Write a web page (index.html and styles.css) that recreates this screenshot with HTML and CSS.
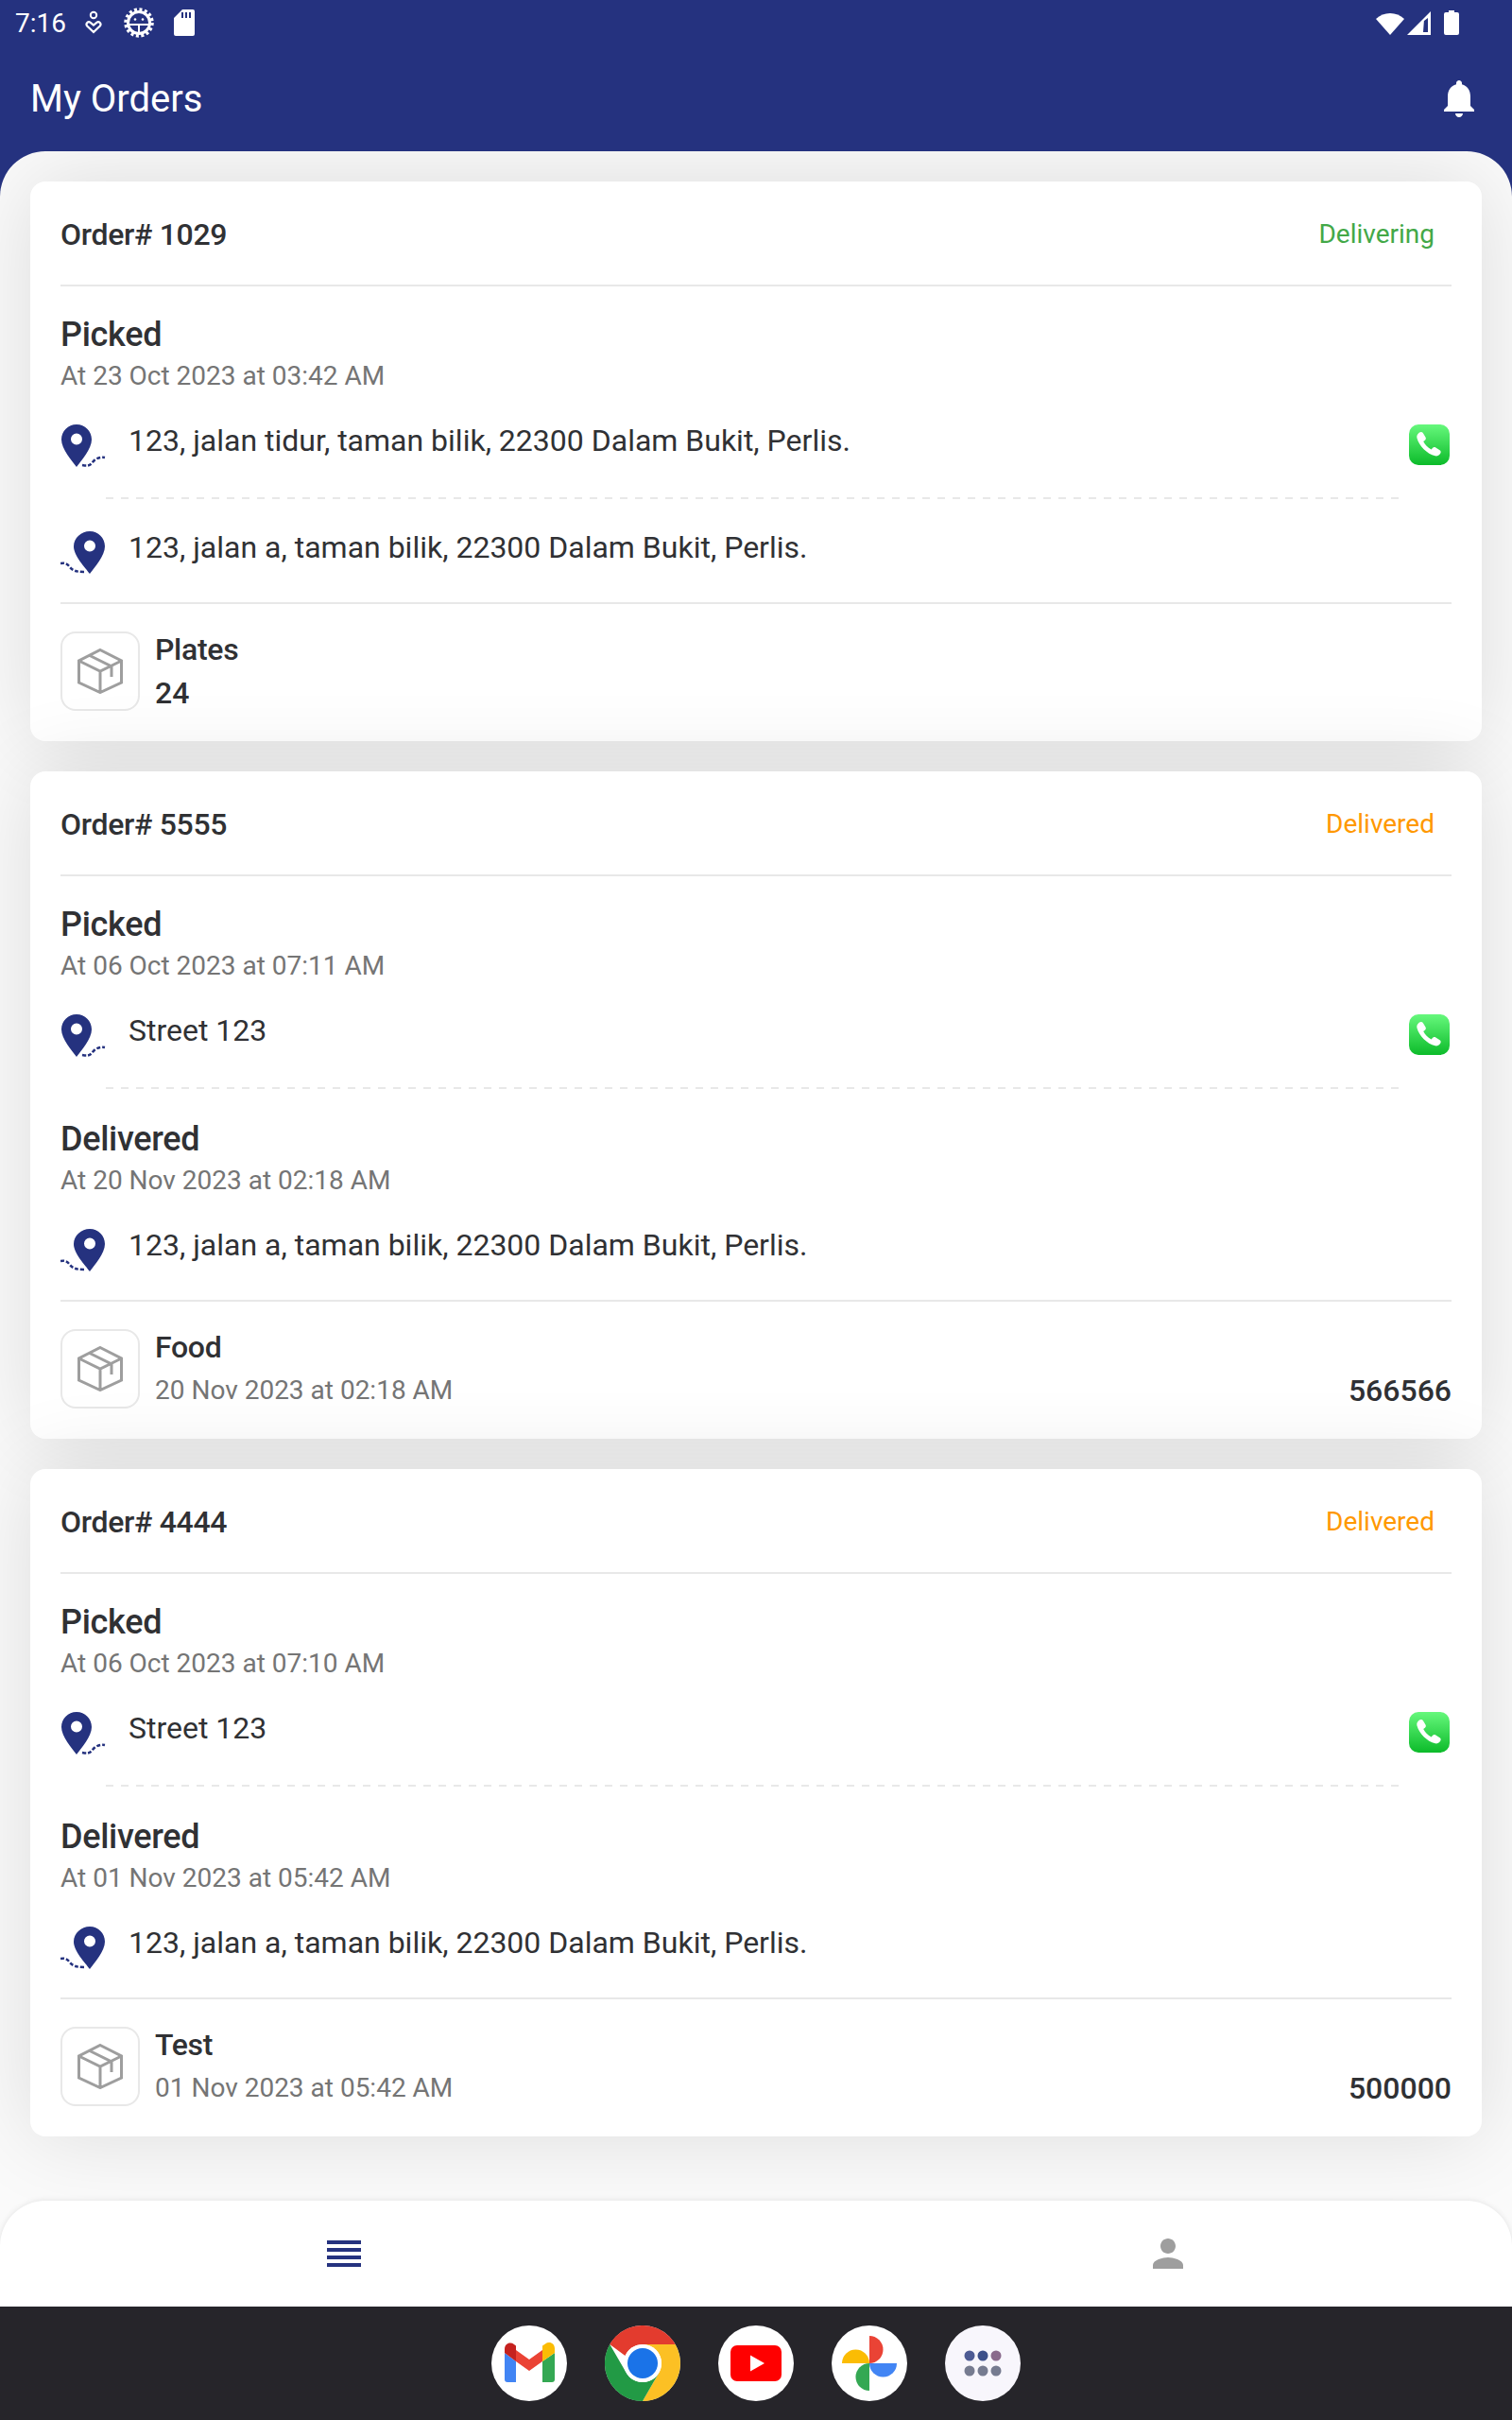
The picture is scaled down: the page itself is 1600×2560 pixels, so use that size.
FILE: index.html
```html
<!DOCTYPE html>
<html lang="en">
<head>
  <meta charset="UTF-8" />
  <title>My Orders</title>
  <link rel="stylesheet" href="styles.css">
</head>
<body>

  <!-- shared icons -->
  <svg class="defs" width="0" height="0">
    <symbol id="pinFrom" viewBox="0 0 48 48">
      <path fill="#25327f" fill-rule="evenodd" d="M17 0C8 0 1 7 1 16c0 10 11 22 16 29 5-7 16-19 16-29C33 7 26 0 17 0zm0 9.500a6 6 0 1 1 0 12 6 6 0 0 1 0-12z"/>
      <path fill="none" stroke="#25327f" stroke-width="2.500" stroke-dasharray="4 2" d="M23 43c5 1 8 1 11-3 3-4 8-6 13-5"/>
    </symbol>
    <symbol id="pinTo" viewBox="0 0 48 48">
      <path fill="#25327f" fill-rule="evenodd" d="M31 0c-9 0-17 7-17 16 0 10 12 22 17 29 5-7 16-19 16-29C47 7 40 0 31 0zm0 9.500a6 6 0 1 1 0 12 6 6 0 0 1 0-12z"/>
      <path fill="none" stroke="#25327f" stroke-width="2.500" stroke-dasharray="4 2" d="M0 34c4-1 7 0 10 4 3 4 8 5 15 5"/>
    </symbol>
    <symbol id="phone" viewBox="0 0 43 43">
      <path fill="#fff" d="M11 8.500c1.500-1 3-.8 3.800.6l2.700 4.500c.7 1.200.4 2.400-.6 3.200l-1.700 1.300c1.800 3.600 4.500 6.300 8.400 8.300l1.500-1.600c.9-.9 2.100-1 3.200-.3l4.300 2.800c1.300.9 1.400 2.400.4 3.700-1.300 1.800-3.200 2.700-5.200 2.300C19 31 10.700 23 8.400 14.200c-.5-2.300.7-4.300 2.600-5.700z"/>
    </symbol>
    <symbol id="box" viewBox="0 0 48 48">
      <path fill="none" stroke="#9e9e9e" stroke-width="3" d="M24 1.500 46.500 13v23L24 46.500 1.500 36V13zM1.500 13 24 24l22.500-11M24 24v22.500M12 7l24 12v11"/>
    </symbol>
  </svg>

  <div class="screen">

    <header class="topBar">
      <div class="statusBar">
        <span class="clock">7:16</span>
        <svg class="stIcon heartIcon" viewBox="0 0 18 28"><circle cx="9" cy="6" r="3.200" fill="none" stroke="#fff" stroke-width="2"/><path fill="none" stroke="#fff" stroke-width="2.200" d="M9 24 2.200 17.500c-2-2.500 1-5.500 3.500-3.700L9 16.500l3.300-2.700c2.500-1.800 5.500 1.200 3.500 3.700z"/></svg>
        <svg class="stIcon gearIcon" viewBox="0 0 32 32">
          <circle cx="16" cy="16" r="11.500" fill="none" stroke="#fff" stroke-width="3"/>
          <circle cx="16" cy="16" r="14" fill="none" stroke="#fff" stroke-width="3.500" stroke-dasharray="3 2.500"/>
          <path fill="none" stroke="#fff" stroke-width="2" d="M5 18h22M16 18v10"/>
          <circle cx="12" cy="12.500" r="1.300" fill="#fff"/><circle cx="20" cy="12.500" r="1.300" fill="#fff"/>
        </svg>
        <svg class="stIcon sdIcon" viewBox="0 0 22 28"><path fill="#fff" fill-rule="evenodd" d="M9 0h11a2 2 0 0 1 2 2v24a2 2 0 0 1-2 2H2a2 2 0 0 1-2-2V9zM8 3v6h2V3zm4 0v6h2V3zm4 0v6h2V3z"/></svg>
        <span class="spacer"></span>
        <svg class="stIcon wifiIcon" viewBox="0 0 30 25"><path fill="#fff" d="M15 25 0 8c8-8 22-8 30 0z"/></svg>
        <svg class="stIcon signalIcon" viewBox="0 0 25 25"><path fill="#fff" fill-rule="evenodd" d="M25 0v25H0zm-7 10-.1 0L17 22h5V7z"/></svg>
        <svg class="stIcon batteryIcon" viewBox="0 0 16 26"><path fill="#fff" d="M5 0h6v2h3a2 2 0 0 1 2 2v20a2 2 0 0 1-2 2H2a2 2 0 0 1-2-2V4a2 2 0 0 1 2-2h3z"/></svg>
      </div>
      <div class="titleRow">
        <h1>My Orders</h1>
        <svg class="bellIcon" viewBox="0 0 24 24"><path fill="#fff" d="M12 22c1.100 0 2-.9 2-2h-4c0 1.100.89 2 2 2zm6-6v-5c0-3.070-1.640-5.640-4.500-6.320V4c0-.83-.67-1.500-1.500-1.500s-1.500.67-1.500 1.500v.68C7.630 5.360 6 7.920 6 11v5l-2 2v1h16v-1l-2-2z"/></svg>
      </div>
    </header>

    <main class="sheet">

      <section class="card">
        <div class="cardHead">
          <span class="orderNo">Order# 1029</span>
          <span class="status delivering">Delivering</span>
        </div>
        <div class="stage">
          <div class="stageTitle">Picked</div>
          <div class="stageDate">At 23 Oct 2023 at 03:42 AM</div>
          <div class="addrRow">
            <svg class="pin"><use href="#pinFrom"/></svg>
            <span class="addr">123, jalan tidur, taman bilik, 22300 Dalam Bukit, Perlis.</span>
            <svg class="phoneBtn"><use href="#phone"/></svg>
          </div>
        </div>
        <div class="dash"></div>
        <div class="addrRow dropRow">
          <svg class="pin"><use href="#pinTo"/></svg>
          <span class="addr">123, jalan a, taman bilik, 22300 Dalam Bukit, Perlis.</span>
        </div>
        <div class="item">
          <div class="boxWrap"><svg class="boxIcon"><use href="#box"/></svg></div>
          <div class="itemText">
            <div class="itemName">Plates</div>
            <div class="itemQty">24</div>
          </div>
        </div>
      </section>

      <section class="card">
        <div class="cardHead">
          <span class="orderNo">Order# 5555</span>
          <span class="status delivered">Delivered</span>
        </div>
        <div class="stage">
          <div class="stageTitle">Picked</div>
          <div class="stageDate">At 06 Oct 2023 at 07:11 AM</div>
          <div class="addrRow">
            <svg class="pin"><use href="#pinFrom"/></svg>
            <span class="addr">Street 123</span>
            <svg class="phoneBtn"><use href="#phone"/></svg>
          </div>
        </div>
        <div class="dash"></div>
        <div class="stage stageEnd">
          <div class="stageTitle">Delivered</div>
          <div class="stageDate">At 20 Nov 2023 at 02:18 AM</div>
          <div class="addrRow dropPin">
            <svg class="pin"><use href="#pinTo"/></svg>
            <span class="addr">123, jalan a, taman bilik, 22300 Dalam Bukit, Perlis.</span>
          </div>
        </div>
        <div class="item">
          <div class="boxWrap"><svg class="boxIcon"><use href="#box"/></svg></div>
          <div class="itemText">
            <div class="itemName">Food</div>
            <div class="itemDate">20 Nov 2023 at 02:18 AM</div>
          </div>
          <div class="amount">566566</div>
        </div>
      </section>

      <section class="card">
        <div class="cardHead">
          <span class="orderNo">Order# 4444</span>
          <span class="status delivered">Delivered</span>
        </div>
        <div class="stage">
          <div class="stageTitle">Picked</div>
          <div class="stageDate">At 06 Oct 2023 at 07:10 AM</div>
          <div class="addrRow">
            <svg class="pin"><use href="#pinFrom"/></svg>
            <span class="addr">Street 123</span>
            <svg class="phoneBtn"><use href="#phone"/></svg>
          </div>
        </div>
        <div class="dash"></div>
        <div class="stage stageEnd">
          <div class="stageTitle">Delivered</div>
          <div class="stageDate">At 01 Nov 2023 at 05:42 AM</div>
          <div class="addrRow dropPin">
            <svg class="pin"><use href="#pinTo"/></svg>
            <span class="addr">123, jalan a, taman bilik, 22300 Dalam Bukit, Perlis.</span>
          </div>
        </div>
        <div class="item">
          <div class="boxWrap"><svg class="boxIcon"><use href="#box"/></svg></div>
          <div class="itemText">
            <div class="itemName">Test</div>
            <div class="itemDate">01 Nov 2023 at 05:42 AM</div>
          </div>
          <div class="amount">500000</div>
        </div>
      </section>

    </main>

    <div class="navWrap">
      <nav class="bottomNav">
        <div class="menuIcon"><i></i><i></i><i></i><i></i></div>
        <svg class="personIcon" viewBox="0 0 24 24"><path fill="#9e9e9e" d="M12 12c2.210 0 4-1.790 4-4s-1.790-4-4-4-4 1.790-4 4 1.790 4 4 4zm0 2c-2.670 0-8 1.340-8 4v2h16v-2c0-2.660-5.330-4-8-4z"/></svg>
      </nav>
    </div>

    <footer class="dock">
      <!-- gmail -->
      <svg class="app" viewBox="0 0 80 80">
        <circle cx="40" cy="40" r="40" fill="#fff"/>
        <path fill="#4285f4" d="M14 29l12 9v22h-9a3 3 0 0 1-3-3z"/>
        <path fill="#34a853" d="M54 38l13-9v28a3 3 0 0 1-3 3H54z"/>
        <path fill="#ea4335" d="M26 26l14 10 14-10v12L40 48 26 38z"/>
        <path fill="#c5221f" d="M14 25c0-6 6-8 10-5l2 1.500V38L14 29z"/>
        <path fill="#fbbc04" d="M54 21.500l3-2c4-3 10-1 10 5V29L54 38z"/>
      </svg>
      <!-- chrome -->
      <svg class="app" viewBox="0 0 80 80">
        <circle cx="40" cy="40" r="40" fill="#fff"/>
        <path fill="#e33b2e" d="M5.300 20A40 40 0 0 1 74.600 20H40a20 20 0 0 0-18.500 12z"/>
        <path fill="#fcc024" d="M74.600 20A40 40 0 0 1 40 80l17.300-30A20 20 0 0 0 40 20z"/>
        <path fill="#229a45" d="M40 80A40 40 0 0 1 5.300 20l17.400 30A20 20 0 0 0 57.300 50z"/>
        <circle cx="40" cy="40" r="20" fill="#fff"/>
        <circle cx="40" cy="40" r="16" fill="#1a73e8"/>
      </svg>
      <!-- youtube -->
      <svg class="app" viewBox="0 0 80 80">
        <circle cx="40" cy="40" r="40" fill="#fff"/>
        <rect x="13" y="21" width="54" height="38" rx="7" fill="#f00"/>
        <path fill="#fff" d="M34 31.500 49 40l-15 8.500z"/>
      </svg>
      <!-- photos -->
      <svg class="app" viewBox="0 0 80 80">
        <circle cx="40" cy="40" r="40" fill="#fff"/>
        <path fill="#fbbc04" d="M11 40a14.500 14.500 0 0 1 29 0z"/>
        <path fill="#ea4335" d="M40 11a14.500 14.500 0 0 1 0 29z"/>
        <path fill="#4285f4" d="M69 40a14.500 14.500 0 0 1-29 0z"/>
        <path fill="#34a853" d="M40 69a14.500 14.500 0 0 1 0-29z"/>
      </svg>
      <!-- app drawer -->
      <svg class="app" viewBox="0 0 80 80">
        <circle cx="40" cy="40" r="40" fill="#f8f6fc"/>
        <circle cx="26" cy="32" r="5.500" fill="#4d5b94"/>
        <circle cx="40" cy="32" r="5.500" fill="#3e5089"/>
        <circle cx="54" cy="32" r="5.500" fill="#8a6a8c"/>
        <circle cx="26" cy="48" r="5.500" fill="#767b90"/>
        <circle cx="40" cy="48" r="5.500" fill="#767b90"/>
        <circle cx="54" cy="48" r="5.500" fill="#767b90"/>
      </svg>
    </footer>

  </div>

</body>
</html>
```

FILE: styles.css
```css
* {
  box-sizing: border-box;
}
body {
  margin: 0;
  font-family: Roboto, "Liberation Sans", sans-serif;
  color: #303134;
  background: #fff;
}
.defs {
  display: block;
  height: 0;
}
.screen {
  width: 1600px;
  height: 2560px;
  display: flex;
  flex-direction: column;
  overflow: hidden;
  background: #25327f;
}

/* top */
.topBar {
  height: 160px;
  flex: none;
  color: #fff;
}
.statusBar {
  height: 48px;
  display: flex;
  align-items: center;
  padding: 0 56px 0 16px;
}
.clock {
  font-size: 28px;
  width: 74px;
}
.stIcon {
  display: block;
  flex: none;
}
.heartIcon {
  width: 18px;
  height: 28px;
}
.gearIcon {
  width: 32px;
  height: 32px;
  margin-left: 23px;
}
.sdIcon {
  width: 22px;
  height: 28px;
  margin-left: 21px;
}
.spacer {
  flex: 1;
}
.wifiIcon {
  width: 30px;
  height: 25px;
}
.signalIcon {
  width: 25px;
  height: 25px;
  margin-left: 3px;
}
.batteryIcon {
  width: 16px;
  height: 26px;
  margin-left: 14px;
}
.titleRow {
  height: 64px;
  margin-top: 24px;
  padding: 0 32px;
  display: flex;
  align-items: center;
  justify-content: space-between;
}
h1 {
  margin: 0;
  font-size: 40px;
  font-weight: 400;
}
.bellIcon {
  width: 48px;
  height: 48px;
}

/* list */
.sheet {
  flex: 1;
  min-height: 0;
  padding: 32px;
  display: flex;
  flex-direction: column;
  gap: 32px;
  background: #fafafa;
  border-radius: 48px 48px 0 0;
  overflow: hidden;
}
.card {
  background: #fff;
  border-radius: 16px;
  padding: 0 32px;
  box-shadow: 0 0 90px rgba(0,0,0,0.12);
}
.cardHead {
  height: 111px;
  padding: 2px 18px 0 0;
  display: flex;
  align-items: center;
  justify-content: space-between;
  border-bottom: 2px solid #e8e8e8;
}
.orderNo {
  font-size: 32px;
  font-weight: 500;
  letter-spacing: -0.3px;
}
.status {
  font-size: 28px;
}
.delivering {
  color: #43a847;
}
.delivered {
  color: #ff9800;
}
.stage {
  padding-top: 27px;
}
.stageEnd {
  padding-top: 29px;
}
.stageTitle {
  font-size: 36px;
  font-weight: 500;
  line-height: 48px;
  letter-spacing: -0.3px;
}
.stageDate {
  font-size: 28px;
  line-height: 40px;
  color: #757575;
}
.addrRow {
  display: flex;
  align-items: flex-start;
  margin-top: 31px;
}
.pin {
  width: 48px;
  height: 48px;
  flex: none;
}
.addr {
  flex: 1;
  font-size: 32px;
  line-height: 40px;
  margin-left: 24px;
  margin-top: -3px;
}
.phoneBtn {
  width: 43px;
  height: 43px;
  margin-right: 2px;
  flex: none;
  border-radius: 10px;
  background: linear-gradient(#66f87c, #0cbb2a);
}
.dash {
  height: 2px;
  margin: 29px 56px 0 48px;
  background: repeating-linear-gradient(90deg, #e8e8e8 0, #e8e8e8 8px, transparent 8px, transparent 16px);
}
.dropRow {
  margin-top: 34px;
}
.dropPin {
  margin-top: 31px;
}
.item {
  margin-top: 27px;
  padding: 29px 0 32px;
  border-top: 2px solid #e8e8e8;
  display: flex;
  align-items: center;
}
.boxWrap {
  width: 84px;
  height: 84px;
  flex: none;
  display: flex;
  align-items: center;
  justify-content: center;
  border: 2px solid #e8e8e8;
  border-radius: 16px;
}
.boxIcon {
  width: 48px;
  height: 48px;
}
.itemText {
  flex: 1;
  margin: -4px 0 -4px 16px;
}
.itemName {
  font-size: 32px;
  font-weight: 500;
  line-height: 46px;
  letter-spacing: -0.3px;
}
.itemQty {
  font-size: 32px;
  font-weight: 500;
  line-height: 46px;
}
.itemDate {
  font-size: 28px;
  line-height: 46px;
  color: #757575;
}
.amount {
  align-self: flex-end;
  font-size: 32px;
  font-weight: 500;
  line-height: 38px;
}

/* bottom */
.navWrap {
  flex: none;
  background: #fafafa;
}
.bottomNav {
  height: 112px;
  display: flex;
  align-items: center;
  justify-content: space-between;
  padding: 0 340px 0 346px;
  background: #fff;
  border-radius: 48px 48px 0 0;
  box-shadow: 0 0 6px rgba(0,0,0,0.1);
}
.menuIcon {
  width: 36px;
  display: flex;
  flex-direction: column;
  gap: 4px;
}
.menuIcon i {
  display: block;
  height: 4px;
  background: #25327f;
}
.personIcon {
  width: 48px;
  height: 48px;
}
.dock {
  height: 120px;
  flex: none;
  display: flex;
  align-items: center;
  justify-content: center;
  gap: 40px;
  background: #26252a;
}
.app {
  width: 80px;
  height: 80px;
}
```
